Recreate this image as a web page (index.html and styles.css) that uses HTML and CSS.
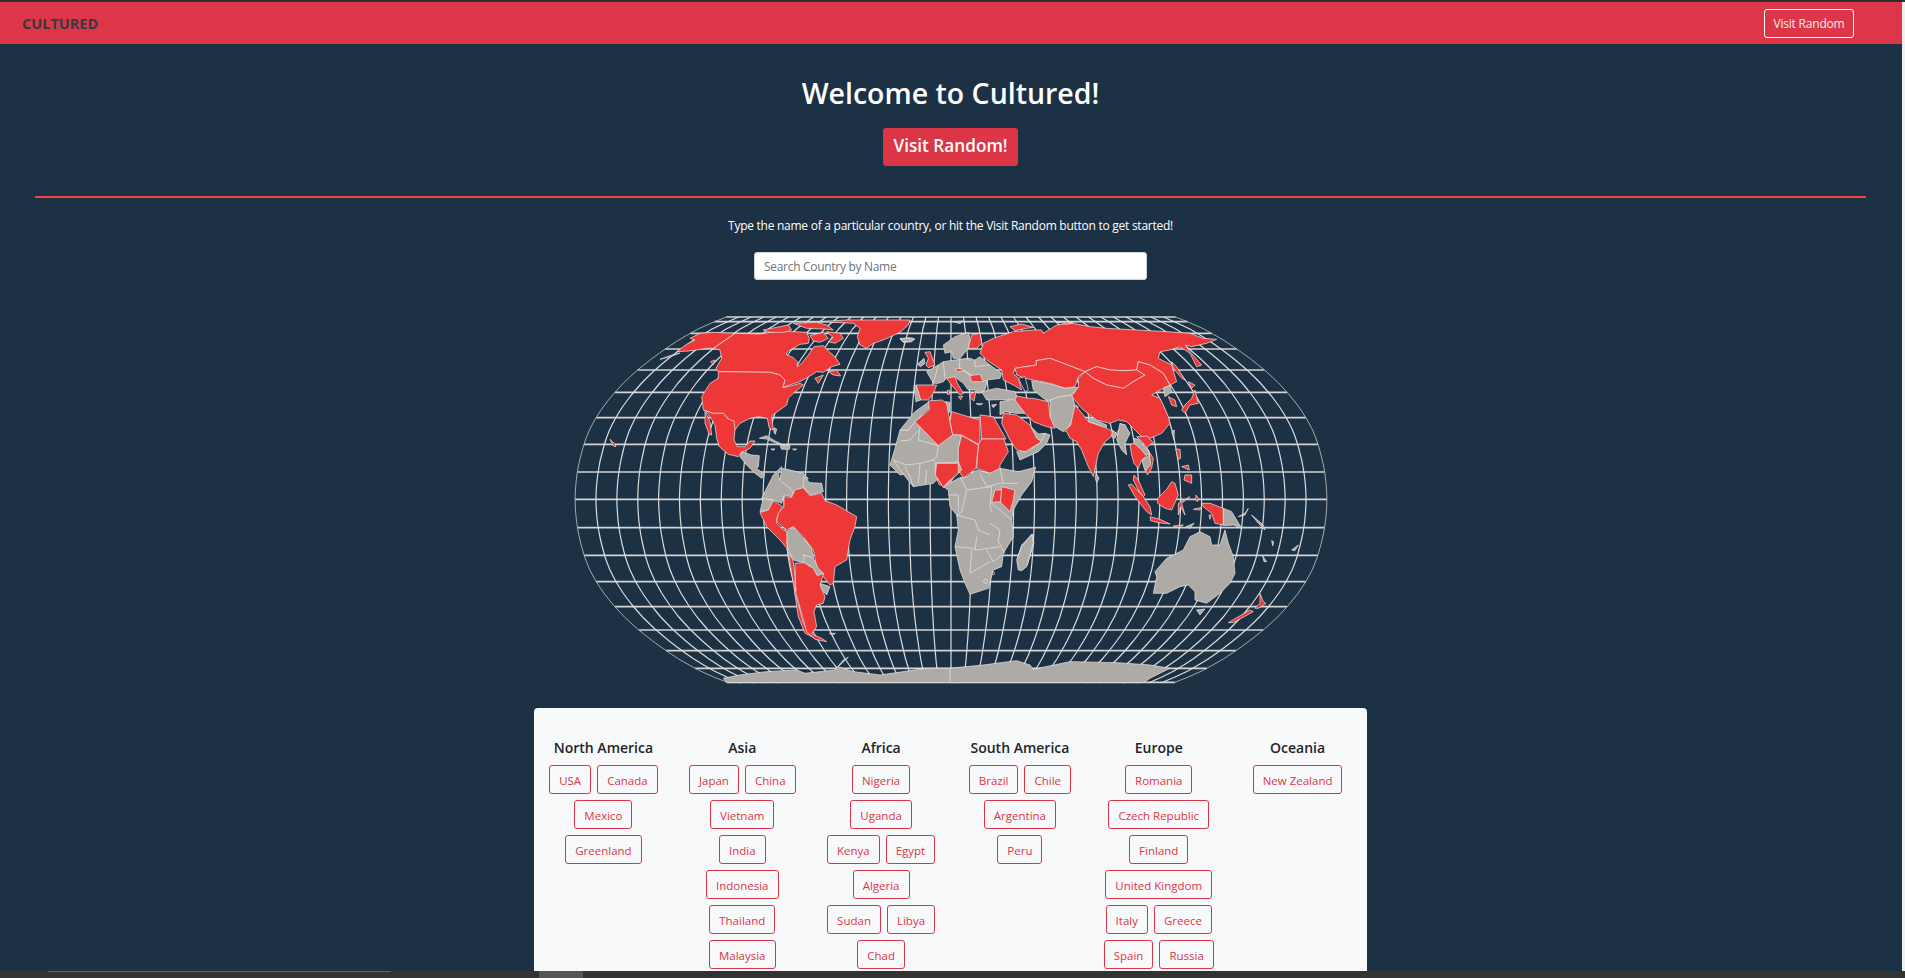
FILE: index.html
```html
<!DOCTYPE html>
<html lang="en">

<head>
	<meta charset="UTF-8">
	<meta name="viewport" content="width=device-width, initial-scale=1.0">
	<title>Cultured</title>
	<link rel="stylesheet" href="styles.css">
</head>

<body>

	<div class="top-strip"></div>

	<div class="window">
		<div class="page">
			<nav class="navbar">
				<a class="brand" href="#">CULTURED</a>
				<a class="btn-nav" href="#">Visit Random</a>
			</nav>

			<main class="content">
				<h1>Welcome to Cultured!</h1>
				<a class="btn-random" href="#">Visit Random!</a>
				<hr class="divider">
				<p class="intro">Type the name of a particular country, or hit the Visit Random button to get started!</p>
				<input class="search" type="text" placeholder="Search Country by Name">

				<svg class="world-map" width="763" height="376" viewBox="569 312 763 376">
					<g id="graticule" class="graticule"></g>

					<!-- north america -->
					<g transform="translate(660 315) scale(.3333)">
						<polygon class="red" points="225,55 300,57 345,50 400,50 440,52 448,70 445,85 420,88 385,108 378,118 400,128 412,140 412,155 425,145 445,120 462,95 490,92 505,108 525,125 540,148 515,155 490,172 470,170 455,180 420,200 395,208 368,218 375,195 360,180 330,172 175,170 168,160 185,130 180,105 160,100"/>
						<polygon class="red" points="225,55 160,100 140,100 110,105 85,108 50,110 70,95 80,88 105,75 90,70 120,55 160,52"/>
						<polygon class="red" points="0,133 30,122 60,114 35,124"/>
						<polygon class="red" points="310,45 345,38 385,30 395,45 370,52 330,52"/>
						<polygon class="red" points="400,25 470,22 500,30 520,45 490,42 440,40"/>
						<polygon class="red" points="450,62 490,52 505,70 480,82 460,78"/>
						<polygon class="red" points="500,50 540,55 550,70 525,85 505,80 520,68"/>
						<polygon class="red" points="480,20 560,15 750,15 745,30 720,52 670,75 640,85 620,100 600,90 592,65 600,40 580,25"/>
						<polygon class="red" points="175,170 330,172 360,180 375,195 368,218 395,212 420,205 430,210 400,235 385,250 380,270 345,295 335,305 340,345 328,340 322,310 295,305 270,310 240,325 225,345 205,312 190,295 160,295 130,285 125,245 150,205 175,190"/>
						<polygon class="red" points="135,287 160,295 190,295 205,312 222,318 225,345 222,375 232,395 255,395 270,378 285,378 270,400 245,412 235,425 205,418 178,395 170,370 165,330 150,305"/>
						<polygon class="red" points="135,290 150,320 155,360 148,358 135,325"/>
						<polygon class="red" points="505,170 530,165 542,183 520,180"/>
						<polygon class="red" points="465,190 490,180 475,205"/>
						<polygon class="red" points="152,140 165,135 160,150"/>
						<polygon class="grey" points="720,72 750,68 765,72 755,80 730,82"/>
						<polygon class="grey" points="298,370 320,362 345,378 375,392 350,385 320,372"/>
						<polygon class="grey" points="360,392 390,392 388,403 365,403"/>
						<polygon class="grey" points="333,402 345,402 340,406"/>
						<polygon class="grey" points="398,402 410,402 404,406"/>
						<polygon class="grey" points="342,338 350,342 346,358 342,352"/>
					</g>

					<!-- south america and west antarctica -->
					<g transform="translate(560 310) scale(.3333)">
						<polygon class="grey" points="545,425 575,435 598,437 595,470 590,475 615,495 605,505 585,490 560,465 540,440"/>
						<polygon class="grey" points="665,470 640,495 620,535 605,565 640,570 665,580 672,555 695,560 700,540 680,520 660,515 655,490"/>
						<polygon class="grey" points="665,475 690,480 730,490 745,505 728,525 735,535 700,555 695,540 672,520 660,510"/>
						<polygon class="grey" points="730,500 750,518 785,520 790,545 750,555 730,530"/>
						<polygon class="grey" points="610,565 640,572 625,600 600,605"/>
						<polygon class="red" points="600,608 625,600 640,572 668,590 650,625 650,640 670,660 685,665 680,700 685,720 660,690 620,650"/>
						<polygon class="red" points="672,560 695,562 705,540 730,533 750,557 785,550 795,572 830,585 890,620 885,650 870,690 860,750 825,770 820,820 810,825 790,800 770,770 760,720 730,680 700,650 680,660 650,635 655,610 672,590"/>
						<polygon class="grey" points="680,665 700,652 735,690 755,715 760,745 730,735 730,758 700,750 685,720 682,700"/>
						<polygon class="grey" points="735,735 760,745 775,775 790,790 770,797 755,770 730,755"/>
						<polygon class="grey" points="780,820 810,830 800,855 780,835"/>
						<polygon class="red" points="685,725 700,755 705,800 705,850 720,900 730,940 755,980 775,990 735,970 715,920 700,820"/>
						<polygon class="red" points="705,760 730,758 760,775 772,797 792,790 780,825 795,860 790,880 770,885 762,905 770,950 755,972 785,985 800,995 765,988 740,965 722,900 708,850"/>
						<polygon class="grey" points="808,970 826,970 818,976"/>
						<polygon class="red" points="150,388 165,402 168,410 160,408"/>
						<polygon class="grey" points="490,1105 540,1095 620,1085 710,1080 735,1090 825,1080 850,1050 865,1042 835,1070 880,1085 960,1095 1100,1075 1200,1075 1200,1118 500,1118"/>
					</g>

					<!-- africa, upper half -->
					<g transform="translate(900 315) scale(.3333)">
						<polygon class="grey" points="0,345 25,345 45,320 115,392 158,360 185,362 175,400 175,465 150,442 110,445 105,480 60,470 0,480 -30,450 -15,400"/>
						<polygon class="grey" points="90,258 88,280 45,320 25,345 0,345 20,320 45,290"/>
						<polygon class="grey" points="135,260 150,262 150,290 145,295"/>
						<polygon class="red" points="85,258 125,255 140,265 150,320 158,360 115,392 45,320 88,285"/>
						<polygon class="red" points="155,290 205,305 240,315 240,390 185,360 158,358 150,320"/>
						<polygon class="red" points="240,300 280,305 318,372 245,372"/>
						<polygon class="red" points="245,372 312,372 325,410 300,450 300,470 270,475 230,460 235,390"/>
						<polygon class="red" points="185,362 235,390 228,460 190,490 175,465 175,400"/>
						<polygon class="red" points="110,445 150,442 175,465 160,490 145,510 118,510 105,480"/>
						<polyline class="border" points="60,335 55,375 115,392"/>
						<polyline class="border" points="0,378 30,375 55,345"/>
						<polyline class="border" points="115,392 110,425 60,470"/>
					</g>

					<!-- africa, lower half and madagascar -->
					<g transform="translate(890 440) scale(.3333)">
						<polygon class="grey" points="10,60 30,90 70,140 130,130 145,115 140,70 130,60 90,70 50,75"/>
						<polygon class="grey" points="160,140 205,115 230,110 260,90 300,100 330,85 385,95 437,82 425,125 395,165 370,210 365,240 370,290 340,340 335,380 310,390 295,445 240,463 225,430 210,390 195,320 205,270 200,225 180,200 175,150"/>
						<polygon class="grey" points="136,70 178,70 205,65 215,90 160,142 136,100"/>
						<polygon class="red" points="140,70 178,70 205,70 205,100 175,125 160,142 136,105"/>
						<polygon class="red" points="315,150 335,150 332,185 305,187"/>
						<polygon class="red" points="335,140 375,150 370,180 360,215 332,187"/>
						<polyline class="border" points="230,150 305,140 300,200 305,215"/>
						<polyline class="border" points="200,225 255,240 265,270 300,285"/>
						<polyline class="border" points="195,320 250,325 260,330 330,320"/>
						<polyline class="border" points="245,330 240,400"/>
						<polyline class="border" points="260,290 255,330"/>
						<polyline class="border" points="305,190 365,240"/>
						<polyline class="border" points="300,250 330,270 325,305 345,340"/>
						<polyline class="border" points="270,100 290,140 330,130 385,130"/>
						<polyline class="border" points="330,85 340,130"/>
						<polyline class="border" points="210,110 230,150 215,215 200,225"/>
						<polyline class="border" points="290,330 310,365 335,345"/>
						<polyline class="border" points="240,400 300,365"/>
						<polyline class="border" points="175,165 205,165 205,215"/>
						<polyline class="border" points="90,70 85,130"/>
						<polyline class="border" points="45,80 60,110 70,140"/>
						<polyline class="border" points="110,90 105,135"/>
						<circle class="border" cx="287" cy="424" r="6"/>
						<circle class="border" cx="310" cy="400" r="4"/>
						<polygon class="grey" points="385,385 382,355 395,315 428,282 432,310 412,375 395,390"/>
					</g>

					<!-- europe -->
					<g transform="translate(900 315) scale(.3333)">
						<polygon class="grey" points="130,90 165,65 205,52 210,70 205,100 180,130 160,130 155,110 135,115"/>
						<polygon class="red" points="205,100 215,60 240,55 245,85 230,100"/>
						<polygon class="red" points="75,112 90,110 105,150 85,158 78,150 85,130"/>
						<polygon class="grey" points="52,148 72,130 75,145 62,155"/>
						<polygon class="grey" points="80,170 115,150 130,140 200,130 225,135 240,125 270,150 305,175 300,190 262,195 255,225 235,235 228,225 205,225 190,205 170,190 140,190 130,200 115,205 100,205"/>
						<polygon class="red" points="48,210 110,210 100,235 85,255 62,255"/>
						<polygon class="grey" points="42,215 48,210 62,255 48,260"/>
						<polygon class="red" points="140,190 165,185 172,205 190,235 180,240 155,210"/>
						<polygon class="red" points="142,226 148,226 148,238 142,238"/>
						<polygon class="red" points="175,245 188,243 182,254"/>
						<polygon class="red" points="210,182 240,178 250,200 215,200"/>
						<polygon class="red" points="165,162 185,160 195,168 172,170"/>
						<polygon class="red" points="210,240 228,228 222,258 212,250"/>
						<polygon class="red" points="200,132 214,130 212,136"/>
						<polygon class="grey" points="160,20 190,18 180,26"/>
						<polygon class="grey" points="0,70 40,70 30,80 8,80"/>
						<polygon class="grey" points="275,270 290,268 280,278"/>
						<polygon class="grey" points="228,266 248,266 240,270"/>
						<polyline class="border" points="130,140 135,190"/>
						<polyline class="border" points="180,130 178,160 210,180"/>
						<polyline class="border" points="115,150 100,205"/>
						<polyline class="border" points="225,135 225,155 270,150"/>
						<polyline class="border" points="195,168 215,180"/>
						<polyline class="border" points="250,200 262,195"/>
					</g>

					<!-- asia, australia and east antarctica -->
					<g transform="translate(950 310) scale(.3333)">
						<polygon class="red" points="90,130 100,100 130,85 190,65 250,60 275,60 280,70 320,45 370,40 420,50 470,55 560,60 650,65 720,70 760,85 800,88 770,100 725,110 705,105 720,125 755,165 740,170 720,130 690,110 660,120 630,125 625,145 665,165 680,215 660,225 640,190 600,165 565,155 560,180 520,182 480,180 440,170 405,185 340,160 300,145 258,152 260,165 195,175 190,190 205,205 215,240 190,225 160,210 155,180 110,150"/>
						<polygon class="red" points="180,50 215,42 250,52 230,55 195,62"/>
						<polygon class="red" points="320,36 370,38 350,42"/>
						<polygon class="red" points="665,155 680,170 705,210 695,205 670,175"/>
						<polygon class="red" points="195,175 260,165 258,152 300,145 340,160 405,185 385,200 375,230 345,235 300,220 250,210 225,205 200,195"/>
						<polygon class="dark" points="205,205 225,200 235,240 225,245 215,225"/>
						<polygon class="red" points="405,185 440,170 480,180 520,182 560,180 585,195 555,212 520,235 470,225 430,205"/>
						<polygon class="red" points="405,185 430,205 470,225 520,235 555,212 585,195 560,180 565,155 600,165 640,190 660,225 640,235 605,255 630,265 640,285 655,320 660,340 635,370 600,385 575,380 550,355 530,335 505,330 480,340 440,330 400,300 365,260 385,230 385,205"/>
						<polygon class="grey" points="640,235 660,225 665,245 645,260"/>
						<polygon class="red" points="655,260 675,270 680,290 665,285"/>
						<polygon class="red" points="705,285 725,265 735,240 745,280 720,285 705,310 695,300"/>
						<polygon class="red" points="715,215 735,225 725,235"/>
						<polygon class="grey" points="245,212 300,222 345,235 385,232 365,255 325,260 300,275 280,265 250,240"/>
						<polygon class="grey" points="300,270 325,262 365,255 375,285 385,290 360,345 340,365 315,350 300,330"/>
						<polygon class="grey" points="95,245 140,235 195,245 200,258 185,268 110,270"/>
						<polygon class="grey" points="150,275 190,268 200,262 225,310 200,310 165,305 150,315"/>
						<polygon class="red" points="200,258 235,265 250,265 295,275 300,320 315,355 290,350 250,335 225,310 195,270"/>
						<polygon class="red" points="160,310 200,315 240,345 260,385 275,395 225,425 200,420 180,390 155,340"/>
						<polygon class="grey" points="200,425 230,425 270,400 285,370 300,375 290,400 265,425 210,450"/>
						<polygon class="grey" points="245,352 265,372 285,370 275,392 262,385"/>
						<polygon class="red" points="375,285 400,315 415,335 470,355 500,370 515,345 527,345 510,375 490,375 465,395 445,430 430,500 415,470 395,420 380,395 360,385 350,365 345,365 362,345"/>
						<polygon class="grey" points="415,320 470,345 470,352 415,335"/>
						<polygon class="grey" points="487,360 500,370 495,385 485,380"/>
						<polygon class="grey" points="510,340 525,345 540,370 525,400 530,435 515,420 500,390"/>
						<polygon class="grey" points="438,490 447,505 440,518 436,505"/>
						<polygon class="grey" points="205,780 200,750 215,710 245,672 250,700 230,770 215,782"/>
						<polygon class="grey" points="610,850 620,800 615,785 650,745 700,720 720,680 750,665 780,680 785,705 810,705 825,660 835,700 850,740 855,790 840,820 810,850 770,880 735,870 735,845 715,825 690,830 650,850"/>
						<polygon class="grey" points="740,900 765,897 750,915"/>
						<polygon class="red" points="835,938 900,900 910,905 850,938"/>
						<polygon class="red" points="915,895 930,880 930,850 940,875 948,880 925,895"/>
						<polygon class="grey" points="0,1075 100,1065 200,1052 240,1065 250,1078 360,1055 500,1058 600,1065 660,1075 600,1105 580,1118 0,1118"/>
					</g>

					<!-- south east asia -->
					<g transform="translate(1110 400) scale(.3333)">
						<polygon class="grey" points="72,115 85,118 100,135 115,150 120,165 105,165 95,150 75,140"/>
						<polygon class="grey" points="95,180 120,165 125,195 105,212"/>
						<polygon class="red" points="80,110 112,108 130,128 118,135 110,145 130,175 125,205 112,225 108,210 122,195 118,155 100,130"/>
						<polygon class="red" points="60,135 72,130 90,145 110,168 95,180 85,205 72,190 65,165"/>
						<polygon class="red" points="72,225 85,240 105,285 100,290 85,270 70,240"/>
						<polygon class="red" points="55,255 65,252 100,290 120,320 125,345 110,335 75,290"/>
						<polygon class="red" points="120,350 150,358 180,372 145,368 122,362"/>
						<polygon class="red" points="143,295 170,268 185,245 195,250 205,285 185,330 165,325 143,310"/>
						<polygon class="red" points="205,310 240,290 215,310 225,345 212,320 205,345"/>
						<polygon class="red" points="197,147 210,148 212,175 205,178"/>
						<polygon class="red" points="215,200 235,195 238,210"/>
						<polygon class="red" points="225,225 245,225 245,250 222,240"/>
						<polygon class="red" points="275,310 300,310 340,325 340,375 315,370 305,340 280,320"/>
						<polygon class="grey" points="340,325 365,335 380,360 395,385 370,375 340,377"/>
						<polygon class="grey" points="228,380 252,370 240,385"/>
						<polygon class="red" points="190,378 220,375 205,382"/>
						<polygon class="red" points="250,328 275,322 270,330"/>
						<polygon class="red" points="258,285 265,295 262,305 257,300"/>
						<polygon class="red" points="297,345 303,345 300,358"/>
						<polygon class="grey" points="385,350 405,340 415,325 405,345"/>
						<polygon class="grey" points="425,345 460,375 465,390 445,370"/>
						<polygon class="grey" points="485,422 491,425 488,438"/>
						<polygon class="grey" points="458,468 470,485 462,485"/>
						<polygon class="grey" points="545,450 565,435 555,452"/>
						<polygon class="grey" points="185,95 193,90 192,118"/>
					</g>
				</svg>

				<section class="continents">
					<div class="continent">
						<h2>North America</h2>
						<div class="country-list">
							<a class="country" href="#">USA</a>
							<a class="country" href="#">Canada</a>
							<a class="country" href="#">Mexico</a>
							<a class="country" href="#">Greenland</a>
						</div>
					</div>
					<div class="continent">
						<h2>Asia</h2>
						<div class="country-list">
							<a class="country" href="#">Japan</a>
							<a class="country" href="#">China</a>
							<a class="country" href="#">Vietnam</a>
							<a class="country" href="#">India</a>
							<a class="country" href="#">Indonesia</a>
							<a class="country" href="#">Thailand</a>
							<a class="country" href="#">Malaysia</a>
						</div>
					</div>
					<div class="continent">
						<h2>Africa</h2>
						<div class="country-list">
							<a class="country" href="#">Nigeria</a>
							<a class="country" href="#">Uganda</a>
							<a class="country" href="#">Kenya</a>
							<a class="country" href="#">Egypt</a>
							<a class="country" href="#">Algeria</a>
							<a class="country" href="#">Sudan</a>
							<a class="country" href="#">Libya</a>
							<a class="country" href="#">Chad</a>
						</div>
					</div>
					<div class="continent">
						<h2>South America</h2>
						<div class="country-list">
							<a class="country" href="#">Brazil</a>
							<a class="country" href="#">Chile</a>
							<a class="country" href="#">Argentina</a>
							<a class="country" href="#">Peru</a>
						</div>
					</div>
					<div class="continent">
						<h2>Europe</h2>
						<div class="country-list">
							<a class="country" href="#">Romania</a>
							<a class="country" href="#">Czech Republic</a>
							<a class="country" href="#">Finland</a>
							<a class="country" href="#">United Kingdom</a>
							<a class="country" href="#">Italy</a>
							<a class="country" href="#">Greece</a>
							<a class="country" href="#">Spain</a>
							<a class="country" href="#">Russia</a>
						</div>
					</div>
					<div class="continent">
						<h2>Oceania</h2>
						<div class="country-list">
							<a class="country" href="#">New Zealand</a>
						</div>
					</div>
				</section>
			</main>
		</div>
		<div class="scroll-strip"></div>
	</div>

	<div class="taskbar">
		<div class="task-search"></div>
		<div class="task-active"></div>
		<div class="task-clock">1:11 PM</div>
	</div>

	<script src="map.js"></script>

</body>

</html>
```

FILE: styles.css
```css
*,
*::before,
*::after {
	box-sizing: border-box;
}

html,
body {
	height: 100%;
}

body {
	margin: 0;
	padding: 0;
	display: flex;
	flex-direction: column;
	overflow: hidden;
	font-family: "Open Sans", "Noto Sans", sans-serif;
	background-color: #1c3144;
	color: white;
}

a {
	text-decoration: none;
}

.top-strip {
	height: 2px;
	background-color: #2e2e2e;
}

.window {
	flex: 1;
	display: flex;
	min-height: 0;
}

.page {
	flex: 1;
	min-width: 0;
	overflow: hidden;
}

.scroll-strip {
	width: 3px;
	background-color: #f0f0f0;
}

.navbar {
	height: 42px;
	padding: 0 48px 0 22px;
	display: flex;
	justify-content: space-between;
	align-items: center;
	background-color: #dd3649;
}

.brand {
	font-size: 14.5px;
	font-weight: 700;
	color: #343a40;
}

.btn-nav {
	width: 90px;
	height: 29px;
	display: flex;
	justify-content: center;
	align-items: center;
	border: 1px solid white;
	border-radius: 3px;
	font-size: 12px;
	letter-spacing: -.2px;
	color: #fbe9eb;
}

.content {
	padding: 30px 1px 0 0;
	display: flex;
	flex-direction: column;
	align-items: center;
}

h1 {
	margin: 0 0 16px;
	font-size: 28.5px;
	line-height: 38px;
	font-weight: 600;
}

.btn-random {
	width: 135px;
	height: 38px;
	padding-bottom: 3px;
	display: flex;
	justify-content: center;
	align-items: center;
	border-radius: 3px;
	background-color: #dc3545;
	color: white;
	font-size: 17.2px;
	font-weight: 600;
}

.divider {
	align-self: stretch;
	height: 2px;
	margin: 30px 35px 18px;
	border: 0;
	background-color: #ef4444;
}

.intro {
	margin: 0 0 16px;
	font-size: 12px;
	letter-spacing: -.26px;
	line-height: 20px;
}

.search {
	width: 393px;
	height: 28px;
	padding: 0 9px;
	border: 1px solid #ced4da;
	border-radius: 3px;
	font-family: inherit;
	font-size: 12px;
	letter-spacing: -.3px;
	background-color: white;
}

.search::placeholder {
	color: #6c757d;
}

.world-map {
	display: block;
	margin-top: 32px;
}

.graticule {
	fill: none;
	stroke: #dcdcdc;
	stroke-width: 1.2;
}

.graticule .parallel {
	stroke-width: 1.7;
	stroke: #d4d4d4;
}

.graticule .edge {
	stroke-width: .9;
	stroke: #b4b4b4;
}

.world-map .red,
.world-map .grey,
.world-map .dark,
.world-map .border {
	stroke: #e6e6e6;
	stroke-width: .7;
	stroke-linejoin: round;
	vector-effect: non-scaling-stroke;
}

.world-map .red {
	fill: #ee3737;
}

.world-map .grey {
	fill: #aeaaa6;
}

.world-map .dark {
	fill: #1c3144;
}

.world-map .border {
	fill: none;
}

.continents {
	width: 833px;
	margin-top: 20px;
	padding: 30px 0;
	display: grid;
	grid-template-columns: repeat(6, 1fr);
	border-radius: 4px;
	background-color: #f8f9fa;
	color: #212529;
}

.continent {
	padding: 0 14px;
	text-align: center;
}

h2 {
	margin: 0 0 8px;
	font-size: 14px;
	line-height: 19px;
	font-weight: 600;
	white-space: nowrap;
}

.country-list {
	display: flex;
	flex-wrap: wrap;
	justify-content: center;
	gap: 6px;
}

.country {
	height: 29px;
	padding: 1px 9px 0;
	display: flex;
	align-items: center;
	border: 1px solid #dc3545;
	border-radius: 3px;
	font-size: 11.5px;
	color: #dc3545;
	white-space: nowrap;
}

.taskbar {
	height: 7px;
	display: flex;
	overflow: hidden;
	background-color: #333333;
}

.task-search {
	width: 343px;
	margin-left: 48px;
	border-top: 1px solid #666666;
}

.task-active {
	width: 44px;
	margin-left: 148px;
	background-color: #555555;
}

.task-clock {
	margin-left: auto;
	margin-right: 42px;
	padding-top: 5px;
	font-size: 12px;
	line-height: 14px;
	color: white;
}
```

FILE: map.js
```js
// robinson table, one row every 5 degrees: parallel length, distance from the equator
var PLEN = [1, .9986, .9954, .99, .9822, .973, .96, .9427, .9216, .8962, .8679, .835, .7986, .7597, .7186, .6732, .6213, .5722, .5322];
var PDFE = [0, .062, .124, .186, .248, .31, .372, .434, .4958, .5571, .6176, .6769, .7346, .7903, .8435, .8936, .9394, .9761, 1];

var CX = 951, CY = 499.5, HALF_W = 376, HALF_H = 190.7;
var TOP = 317, BOTTOM = 683;
var SVG_NS = "http://www.w3.org/2000/svg";

// parallels are not evenly spaced on this map, these were read off the picture
var PARALLELS = [317, 321.7, 333.3, 349, 370, 392.3, 417.7, 444.3, 472, 499.3, 527.7, 555.3, 581.7, 606.7, 630, 650.7, 668.3, 682.3];

function halfWidth(y) {
	var s = Math.min(Math.abs(y - CY) / HALF_H, 1);
	for (var i = 1; i < PDFE.length; i++) {
		if (s <= PDFE[i]) {
			var t = (s - PDFE[i - 1]) / (PDFE[i] - PDFE[i - 1]);
			return HALF_W * (PLEN[i - 1] + t * (PLEN[i] - PLEN[i - 1]));
		}
	}
	return HALF_W * PLEN[PLEN.length - 1];
}

function addLine(group, points, cls) {
	var line = document.createElementNS(SVG_NS, "polyline");
	line.setAttribute("points", points.join(" "));
	if (cls) {
		line.setAttribute("class", cls);
	}
	group.appendChild(line);
}

var group = document.getElementById("graticule");

PARALLELS.forEach(function (y) {
	var w = halfWidth(y);
	addLine(group, [(CX - w) + "," + y, (CX + w) + "," + y], "parallel");
});

for (var lon = -180; lon <= 180; lon += 10) {
	var points = [];
	for (var y = TOP; y <= BOTTOM; y += 6) {
		points.push((CX + halfWidth(y) * lon / 180).toFixed(1) + "," + y);
	}
	addLine(group, points, Math.abs(lon) == 180 ? "edge" : "");
}
```
